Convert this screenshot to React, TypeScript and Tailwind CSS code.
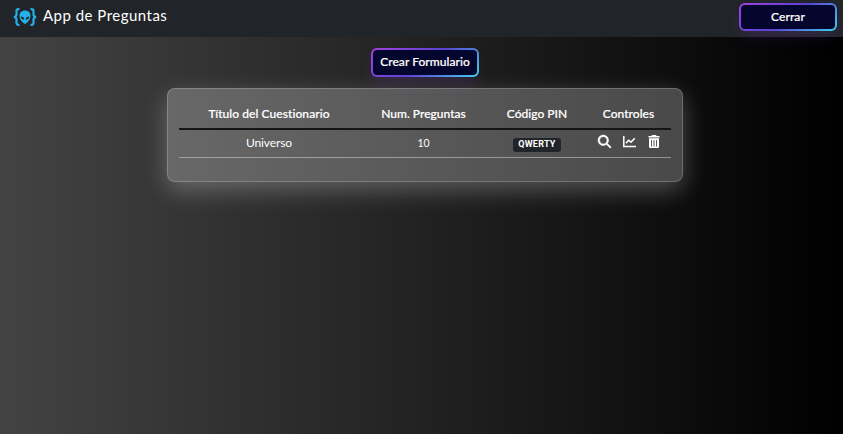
import { FaMagnifyingGlass } from "react-icons/fa6";

const BLUE = "#24b0ea";

function Logo() {
  return (
    <svg className="block h-[18px] w-[24px]" viewBox="0 0 24 18" fill="none">
      <path
        d="M6.500 1.200H5.500Q3.500 1.200 3.500 3.200V6.500Q3.500 8.500 1 9Q3.500 9.500 3.500 11.500V14.800Q3.500 16.800 5.500 16.800H6.500M17.500 1.200H18.500Q20.500 1.200 20.500 3.200V6.500Q20.500 8.500 23 9Q20.500 9.500 20.500 11.500V14.800Q20.500 16.800 18.500 16.800H17.500"
        stroke={BLUE}
        strokeWidth="2.200"
      />
      <path
        fillRule="evenodd"
        fill={BLUE}
        d="M12 2.500C8.500 2.500 6.500 4.800 6.500 8C6.500 11.500 9.800 15 12 16C14.200 15 17.500 11.500 17.500 8C17.500 4.800 15.500 2.500 12 2.500ZM7.800 8.500C9.800 8.500 11.200 9.700 11.300 11.600C9.200 11.700 7.900 10.500 7.800 8.500ZM16.200 8.500C14.200 8.500 12.800 9.700 12.700 11.600C14.800 11.700 16.100 10.500 16.200 8.500Z"
      />
    </svg>
  );
}

function ChartIcon() {
  return (
    <svg className="h-[13px] w-[13px]" viewBox="0 0 13 13" fill="none" stroke="white">
      <path d="M.8 1V11.400H13" strokeWidth="1.500" />
      <path d="M3 8.300L5.500 5.200L8 7.100L11.800 3.300" strokeWidth="1.500" strokeLinejoin="round" />
    </svg>
  );
}

function TrashIcon() {
  return (
    <svg className="h-[13px] w-[12px]" viewBox="0 0 12 13">
      <path
        fill="white"
        fillRule="evenodd"
        d="M4 0H8L8.600 1H11.500V2.600H.5V1H3.400ZM1 3.300H11V11.800Q11 13 9.800 13H2.200Q1 13 1 11.800ZM3 5V11.500H3.900V5ZM5.550 5V11.500H6.450V5ZM8.100 5V11.500H9V5Z"
      />
    </svg>
  );
}

function GlowButton({ label, size, text }: { label: string; size: string; text: string }) {
  return (
    <button
      className={`rounded-[6px] bg-[linear-gradient(144deg,#a343e0,#5b42d3_50%,#3fd0ea)] p-[2px] shadow-[0_8px_16px_-3px_rgba(151,65,252,0.15)] ${size}`}
    >
      <span className="flex h-full w-full items-center justify-center rounded-[4px] bg-[#05062d] text-white">
        <span className={`whitespace-nowrap font-medium [-webkit-text-stroke:0.2px_white] ${text}`}>{label}</span>
      </span>
    </button>
  );
}

export default function App() {
  return (
    <div className="h-[434px] w-full overflow-hidden bg-[linear-gradient(to_right,#434343,#000)] font-['Lato',sans-serif] text-white">
      <header className="flex h-[37px] items-start justify-between bg-[#212529] pl-[13px] pr-[6px]">
        <div className="flex pt-[8px]">
          <Logo />
          <span className="ml-[6px] text-[15px] leading-[15px] tracking-[0.48px]">App de Preguntas</span>
        </div>
        <GlowButton label="Cerrar" size="mt-[3px] h-[28px] w-[98px]" text="text-[12px] tracking-[0.1px]" />
      </header>
      <main className="flex flex-col items-center">
        <div className="pt-[11px] pl-[7px]">
          <GlowButton label="Crear Formulario" size="block h-[29px] w-[108px]" text="text-[12px] leading-[16px] pb-px tracking-[0.05px]" />
        </div>
        <section className="ml-[7px] mt-[11px] h-[94px] w-[516px] rounded-[8px] border border-white/20 bg-white/25 px-[11px] pt-[10px] shadow-[0_8px_24px_rgba(255,255,255,0.27)]">
          <table className="w-[492px] table-fixed border-collapse text-center text-[12px]">
            <colgroup>
              <col className="w-[180px]" />
              <col className="w-[129px]" />
              <col className="w-[98px]" />
              <col className="w-[85px]" />
            </colgroup>
            <thead>
              <tr className="h-[30px] whitespace-nowrap border-b-2 border-[#151515] [-webkit-text-stroke:0.2px_white]">
                <th className="p-0 font-medium tracking-[0.07px]">Título del Cuestionario</th>
                <th className="p-0 font-medium tracking-[0px]">Num. Preguntas</th>
                <th className="p-0 font-medium tracking-[0px]">Código PIN</th>
                <th className="p-0 font-medium tracking-[0.05px]">Controles</th>
              </tr>
            </thead>
            <tbody>
              <tr className="h-[28px] border-b border-white/40">
                <td className="p-0 pb-px tracking-[-0.1px]">Universo</td>
                <td className="p-0 pt-px text-[10.5px]">10</td>
                <td className="p-0">
                  <span className="mx-auto mt-[3px] flex h-[14px] w-[48px] items-center justify-center rounded-[3px] bg-[#212529] font-['Roboto',sans-serif] text-[9px] font-bold tracking-[0.25px]">
                    QWERTY
                  </span>
                </td>
                <td className="p-0">
                  <div className="flex items-center justify-center gap-[12px] pb-[3px]">
                    <FaMagnifyingGlass size={13} className="overflow-visible" stroke="white" strokeWidth={18} />
                    <ChartIcon />
                    <TrashIcon />
                  </div>
                </td>
              </tr>
            </tbody>
          </table>
        </section>
      </main>
    </div>
  );
}
